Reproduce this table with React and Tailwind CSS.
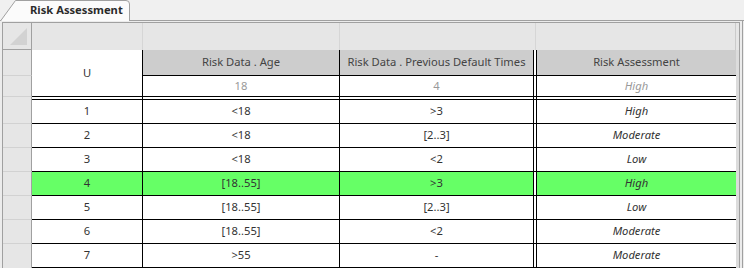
import React from 'react'

const ROWS = [
  { id: 1, age: '<18', prev: '>3', risk: 'High' },
  { id: 2, age: '<18', prev: '[2..3]', risk: 'Moderate' },
  { id: 3, age: '<18', prev: '<2', risk: 'Low' },
  { id: 4, age: '[18..55]', prev: '>3', risk: 'High', hit: true },
  { id: 5, age: '[18..55]', prev: '[2..3]', risk: 'Low' },
  { id: 6, age: '[18..55]', prev: '<2', risk: 'Moderate' },
  { id: 7, age: '>55', prev: '-', risk: 'Moderate' },
]

// gutter | U | age | prev | gap | assessment | edge
const GRID = 'grid grid-cols-[29px_111px_197px_194px_2px_200px_3px]'

function Tab() {
  return (
    <div className="relative h-[21px] border-b border-[#a0a0a0] bg-[#f0f0f0]">
      <svg className="absolute left-0 top-0" width="132" height="21" viewBox="0 0 132 21">
        <path d="M0.5 21 L15.5 0.5 H126 Q129.5 0.5 129.5 4 V21" fill="#fbfbfb" stroke="#a0a0a0" />
      </svg>
      <span className="absolute left-[30px] top-[3px] text-[11.2px] font-bold leading-[14px] text-[#2b2b2b]">
        Risk Assessment
      </span>
    </div>
  )
}

function GutterCell({ last }) {
  return <div className={'border-r border-[#a0a0a0] bg-[#e6e6e6] ' + (last ? '' : 'border-b border-b-[#d2d2d2]')} />
}

export default function App() {
  return (
    <div className="h-[268px] w-[744px] overflow-hidden bg-[#ececec] font-['Noto_Sans','Open_Sans',sans-serif] text-[11.2px] text-[#333]">
      <Tab />
      <div className="flex pl-[2px] pt-px">
        <div className="border-l border-r border-t border-[#a0a0a0]">
          <div className={GRID + ' grid-rows-[27px_26px_21px_3px_repeat(7,24px)]'}>
            {/* filler header strip */}
            <div className="relative border-b border-r border-[#a0a0a0] bg-[#e6e6e6]">
              <svg className="absolute left-0 top-0" width="28" height="27">
                <path d="M7 22 L24 22 L24 5 Z" fill="#d2d2d2" />
              </svg>
            </div>
            <div className="border-r border-[#d6d6d6] bg-[#e6e6e6]" />
            <div className="border-r border-[#d6d6d6] bg-[#e6e6e6]" />
            <div className="bg-[#e6e6e6]" />
            <div className="border-r border-[#d6d6d6] bg-[#e6e6e6]" />
            <div className="border-r border-[#cbcbcb] bg-[#e6e6e6]" />
            <div className="bg-[#e6e6e6]" />

            {/* column headers */}
            <GutterCell />
            <div className="row-span-2 flex items-center justify-center border-b border-r border-black bg-white">U</div>
            <div className="flex items-center justify-center border-b border-r border-black bg-[#cdcdcd] text-[#444]">
              Risk Data . Age
            </div>
            <div className="flex items-center justify-center border-b border-r border-black bg-[#cdcdcd] text-[#444]">
              Risk Data . Previous Default Times
            </div>
            <div className="border-b border-black bg-white" />
            <div className="flex items-center justify-center border-b border-l border-black bg-[#cdcdcd] text-[#444]">
              Risk Assessment
            </div>
            <div className="row-span-11 bg-[#dcdcdc]" />

            <GutterCell />
            <div className="flex items-center justify-center border-b border-r border-black bg-white text-[#999]">18</div>
            <div className="flex items-center justify-center border-b border-r border-black bg-white text-[#999]">4</div>
            <div className="border-b border-black bg-white" />
            <div className="flex items-center justify-center border-b border-l border-black bg-white italic text-[#999]">
              High
            </div>

            {/* double rule under headers */}
            <div className="border-r border-[#a0a0a0] bg-[#e6e6e6]" />
            <div className="border-b border-r border-black bg-white" />
            <div className="border-b border-r border-black bg-white" />
            <div className="border-b border-r border-black bg-white" />
            <div className="border-b border-black bg-white" />
            <div className="border-b border-l border-black bg-white" />

            {ROWS.map((row, i) => {
              const bg = row.hit ? 'bg-[#66ff66]' : 'bg-white'
              return (
                <React.Fragment key={row.id}>
                  <GutterCell last={i === ROWS.length - 1} />
                  <div className={'flex items-center justify-center border-b border-r border-black ' + bg}>{row.id}</div>
                  <div className={'flex items-center justify-center border-b border-r border-black ' + bg}>{row.age}</div>
                  <div className={'flex items-center justify-center border-b border-r border-black ' + bg}>{row.prev}</div>
                  <div className="border-b border-black bg-white" />
                  <div className={'flex items-center justify-center border-b border-l border-black italic ' + bg}>
                    {row.risk}
                  </div>
                </React.Fragment>
              )
            })}
          </div>
        </div>
        <div className="ml-[2px] mt-[-1px] w-px self-stretch bg-[#a0a0a0]" />
      </div>
    </div>
  )
}
